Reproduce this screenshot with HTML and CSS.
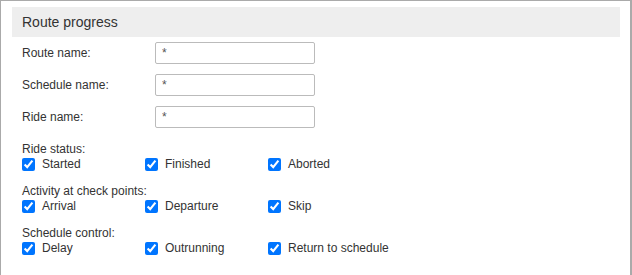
FILE: index.html
```html
<!DOCTYPE html>
<html>
<head>
<meta charset="utf-8">
<link rel="stylesheet" href="styles.css">
</head>
<body>
<div class="panel">
  <div class="panel-header">Route progress</div>
  <div class="panel-body">
    <div class="field"><label class="field-label">Route name:</label><input class="field-input" type="text" value="*"></div>
    <div class="field"><label class="field-label">Schedule name:</label><input class="field-input" type="text" value="*"></div>
    <div class="field"><label class="field-label">Ride name:</label><input class="field-input" type="text" value="*"></div>

    <div class="group">
      <div class="group-label">Ride status:</div>
      <div class="checks">
        <label class="check"><input type="checkbox" checked><span>Started</span></label>
        <label class="check"><input type="checkbox" checked><span>Finished</span></label>
        <label class="check"><input type="checkbox" checked><span>Aborted</span></label>
      </div>
    </div>
    <div class="group">
      <div class="group-label">Activity at check points:</div>
      <div class="checks">
        <label class="check"><input type="checkbox" checked><span>Arrival</span></label>
        <label class="check"><input type="checkbox" checked><span>Departure</span></label>
        <label class="check"><input type="checkbox" checked><span>Skip</span></label>
      </div>
    </div>
    <div class="group">
      <div class="group-label">Schedule control:</div>
      <div class="checks">
        <label class="check"><input type="checkbox" checked><span>Delay</span></label>
        <label class="check"><input type="checkbox" checked><span>Outrunning</span></label>
        <label class="check"><input type="checkbox" checked><span>Return to schedule</span></label>
      </div>
    </div>
  </div>
</div>
</body>
</html>
```
FILE: styles.css
```css
html, body {
  margin: 0;
  padding: 0;
  background: #fff;
  overflow: hidden;
}
body {
  font-family: "Liberation Sans", Arial, sans-serif;
  font-size: 12px;
  color: #333;
}
.panel {
  width: 632px;
  height: 275px;
  box-sizing: border-box;
  border: 1px solid #aaa;
  border-right-width: 2px;
  border-bottom: none;
  padding: 6px 10px 0 11px;
}
.panel-header {
  height: 30px;
  background: #eee;
  font-size: 14px;
  line-height: 30px;
  padding-left: 10px;
}
.panel-body {
  padding-left: 10px;
}
.field {
  display: flex;
  align-items: center;
  height: 22px;
  padding: 5px 0;
}
.field-label {
  width: 133px;
}
.field-input {
  width: 160px;
  height: 22px;
  box-sizing: border-box;
  border: 1px solid #bbb;
  border-radius: 2px;
  padding: 0 6px;
  font-family: "Liberation Sans", Arial, sans-serif;
  font-size: 12px;
  color: #555;
  margin: 0;
}
.group {
  margin-top: 9px;
  margin-bottom: 13px;
}
.group + .group {
  margin-top: 0;
}
.group-label {
  line-height: 15px;
}
.checks {
  display: grid;
  grid-template-columns: 123px 123px 1fr;
  height: 14px;
}
.check {
  display: flex;
  align-items: center;
  gap: 7px;
  line-height: 14px;
}
.check input {
  margin: 0;
  width: 13px;
  height: 13px;
}
```
